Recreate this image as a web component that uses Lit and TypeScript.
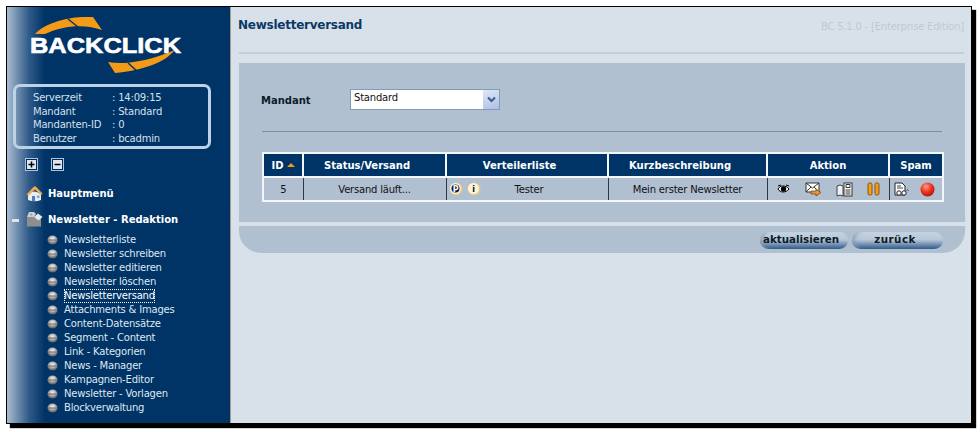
import { LitElement, html, css } from "lit";
import { customElement } from "lit/decorators.js";

const items = ["Newsletterliste","Newsletter schreiben","Newsletter editieren","Newsletter löschen","Newsletterversand","Attachments & Images","Content-Datensätze","Segment - Content","Link - Kategorien","News - Manager","Kampagnen-Editor","Newsletter - Vorlagen","Blockverwaltung"];

const bullet = html`<svg class="bullet" width="11" height="10" viewBox="0 0 11 10"><defs><radialGradient id="bl" cx="50%" cy="35%" r="65%"><stop offset="0" stop-color="#f4f4f4"/><stop offset=".55" stop-color="#a8a8a8"/><stop offset="1" stop-color="#555"/></radialGradient></defs><ellipse cx="5.5" cy="5" rx="5" ry="4.5" fill="url(#bl)"/><path d="M1 5h9" stroke="#6d6d6d" stroke-width="1"/></svg>`;

function badge(l: string) {
  return html`<svg width="14" height="14" viewBox="0 0 14 14"><circle cx="7" cy="7" r="6.500" fill="#e8c98a"/><circle cx="6.500" cy="6.500" r="5.500" fill="#fbf3dc"/><circle cx="6.500" cy="6.500" r="4" fill="${l === "P" ? "#0a1f44" : "#fbf3dc"}"/><text x="6.500" y="9.500" text-anchor="middle" font-family="DejaVu Sans" font-weight="700" font-size="8" fill="${l === "P" ? "#fff" : "#111"}">${l}</text></svg>`;
}

@customElement("app-root")
export class AppRoot extends LitElement {
  static styles = css`
    :host { display:block; width:980px; height:432px; background:#fff; overflow:hidden; font-family:"DejaVu Sans",Verdana,sans-serif; font-size:10px; letter-spacing:-.2px; box-sizing:border-box; padding:6px 0 0 6px; }
    .frame { display:flex; width:966px; height:418px; box-sizing:border-box; border:1px solid #000; box-shadow:4px 4px 1px #000; background:#d8e1e9; }
    .side { width:223px; flex:none; background:linear-gradient(90deg,#a9bdd2 0,#7d98b5 8px,#2f5a88 22px,#003366 38px); color:#e8eef5; display:flex; flex-direction:column; }
    .logo { height:77px; padding-left:17px; flex:none; }
    .logo text { letter-spacing:0; }
    .info { margin-left:6px; width:198px; height:65px; box-sizing:border-box; border:3px solid #bdd2e6; border-radius:7px; padding:4px 0 0 17px; display:grid; grid-template-columns:79px 1fr; grid-auto-rows:13.5px; line-height:13.5px; color:#d5e0ec; flex:none; }
    .toggles { display:flex; gap:13px; margin:9px 0 0 18px; flex:none; }
    .tg { width:13px; height:13px; box-sizing:border-box; border:1px solid #a9c4e0; background:#002a55; padding:1px; display:flex; }
    .tg svg { display:block; }
    .main-link { display:flex; align-items:center; font-weight:700; font-size:10px; letter-spacing:0; color:#fff; height:18px; }
    .h1 { margin-top:13px; padding-left:19px; gap:5px; }
    .h2 { margin-top:8px; padding-left:5px; }
    .h2 .mn { width:7px; height:3px; background:#e8e8e8; margin:3px 7px 0 0; border:1px solid #dde; box-sizing:border-box; }
    .h2 svg { margin-right:5px; }
    .list { margin:5px 0 0 40px; display:flex; flex-direction:column; }
    .it { height:14px; line-height:14px; display:flex; align-items:center; color:#dfe8f1; white-space:nowrap; }
    .bullet { margin-right:6px; flex:none; }
    .it span { box-sizing:border-box; height:14px; line-height:13px; }
    .it.cur span { outline:1px dotted #fff; outline-offset:-1px; color:#fff; }
    .main { flex:1; border-left:1px solid #9a9f8c; display:flex; flex-direction:column; padding:0 6px 0 8px; min-width:0; }
    .top { display:flex; justify-content:space-between; height:47px; box-sizing:border-box; padding-top:10px; border-bottom:2px solid #c2cedb; margin-right:1px; }
    .top h1 { margin:0 0 0 -1px; font-size:12px; letter-spacing:-.25px; font-weight:700; color:#0b3a66; line-height:17px; }
    .ver { color:#bfc9d3; padding-top:4px; font-size:10px; letter-spacing:-.2px; }
    .panel { margin-top:9px; background:#b0c0d1; height:159px; box-sizing:border-box; padding:28px 23px 0 23px; }
    .sel-row { display:flex; align-items:center; height:22px; }
    .sel-row b { width:89px; font-size:10px; letter-spacing:0; color:#0d1b2a; padding-bottom:3px; margin-left:-1px; }
    .sel { width:150px; height:21px; box-sizing:border-box; border:1px solid #7f9db9; background:#fff; color:#111; display:flex; justify-content:space-between; padding:2px 0 0 3px; position:relative; top:-3px; }
    .arrow { width:16px; height:19px; margin-top:-2px; background:linear-gradient(160deg,#dfe8f6,#aebfe4); display:flex; align-items:center; justify-content:center; }
    hr { border:0; border-top:1px solid #7c8fa3; margin:18px 0 0; width:680px; }
    table { margin:20px 0 0; width:680px; border-collapse:collapse; table-layout:fixed; border:2px solid #f2f6fa; }
    th { background:#003366; color:#fff; font-size:10px; height:22px; border:2px solid #f2f6fa; padding:0; font-weight:700; letter-spacing:0; }
    th.sh { padding-right:15px; }
    td { height:22px; border-left:1px solid #2c3a48; padding:0; text-align:center; color:#111; background:#b0c0d1; }
    td:first-child { border-left:0; }
    .tri { display:inline-block; border:4px solid transparent; border-top:0; border-bottom:4px solid #f09a1a; margin-left:3px; vertical-align:2px; }
    .vl { position:relative; padding-left:4px; }
    .pi { display:flex; gap:4px; position:absolute; left:2px; top:4px; }
    .ic { display:flex; align-items:center; padding-left:9px; height:22px; }
    .ic.sp { padding-left:4px; gap:10px; }
    .gap1 { margin-left:15px; }
    .gap2 { margin-left:14px; }
    .gap3 { margin-left:14px; }
    .band { margin-top:4px; height:27px; background:#b0c0d1; border-radius:0 0 22px 22px; display:flex; justify-content:flex-end; gap:4px; padding:6px 22px 0 0; box-sizing:border-box; }
    .btn { height:17px; border-radius:9px; font-weight:700; font-size:10.3px; letter-spacing:0; line-height:15px; color:#0d1b2a; text-align:center; background:linear-gradient(180deg,#c7d4e0 0,#b8c7d7 45%,#6f8dae 75%,#2c5a8a 100%); box-shadow:inset 6px 0 5px -4px #7f9ab5; box-sizing:border-box; }
    .b1 { width:88px; padding-right:6px; }
    .b2 { width:91px; padding-right:5px; letter-spacing:.5px; }
  `;

  render() {
    return html`<div class="frame">
      <div class="side">
        <div class="logo">
          <svg width="170" height="77" viewBox="0 0 170 77">
            <path d="M11 27 C20 17 40 11 58 10 L69 10 L78 23 C62 17 40 18 21 27 Z" fill="#f39a17"/>
            <path d="M44 12 L54 20" stroke="#003366" stroke-width="1.5"/>
            <path d="M84 55 C100 58 122 55 151 43 C140 56 120 63 91 66 Z" fill="#f39a17"/>
            <path d="M104 56 L114 65" stroke="#003366" stroke-width="1.5"/>
            <text x="6" y="46" font-family="Liberation Sans" font-weight="700" font-size="21.500" fill="#fff" stroke="#fff" stroke-width=".6" textLength="151" lengthAdjust="spacingAndGlyphs">BACKCLICK</text>
          </svg>
        </div>
        <div class="info">
          <span>Serverzeit</span><span>: 14:09:15</span>
          <span>Mandant</span><span>: Standard</span>
          <span>Mandanten-ID</span><span>: 0</span>
          <span>Benutzer</span><span>: bcadmin</span>
        </div>
        <div class="toggles">
          <div class="tg"><svg width="9" height="9" viewBox="0 0 9 9"><rect width="9" height="9" fill="#dfe6ee"/><path d="M1.500 4.500h6M4.500 1.500v6" stroke="#000" stroke-width="1.500"/></svg></div>
          <div class="tg"><svg width="9" height="9" viewBox="0 0 9 9"><rect width="9" height="9" fill="#dfe6ee"/><path d="M1.500 4.500h6" stroke="#000" stroke-width="1.500"/></svg></div>
        </div>
        <div class="main-link h1">
          <svg width="17" height="17" viewBox="0 0 17 17"><path d="M2 9 Q8 4 15 9 L15 15 Q9 17.500 2 15z" fill="#e6edf5"/><path d="M6 16v-5h3v5z" fill="#4f7fb5"/><path d="M11 10.500h2.500v2.500H11z" fill="#7aa6d8"/><path d="M0.500 9.500 8 1.500 Q9 .8 10 1.800 L16.500 8.500 15 10 9 4.500 2.500 10.500z" fill="#f5a94a"/></svg>
          <span>Hauptmenü</span>
        </div>
        <div class="main-link h2">
          <div class="mn"></div>
          <svg width="17" height="16" viewBox="0 0 17 16"><path d="M1 6h14v9.500H1z" fill="#8c8f8e"/><path d="M1 6 3 1h5l2 2-2 3z" fill="#c9cfd4"/><path d="M8 6l4-3.500 4.500 3.500-4 3.500z" fill="#e4e9ee"/><path d="M4 3l2 1" stroke="#7f8a94"/></svg>
          <span>Newsletter - Redaktion</span>
        </div>
        <div class="list">
          ${items.map((t) => html`<div class="it ${t === "Newsletterversand" ? "cur" : ""}">${bullet}<span>${t}</span></div>`)}
        </div>
      </div>
      <div class="main">
        <div class="top"><h1>Newsletterversand</h1><span class="ver">BC 5.1.0 - [Enterprise Edition]</span></div>
        <div class="panel">
          <div class="sel-row"><b>Mandant</b>
            <div class="sel"><span>Standard</span><div class="arrow"><svg width="9" height="7" viewBox="0 0 9 7"><path d="M1 1.500 4.500 5 8 1.500" fill="none" stroke="#3c5a8c" stroke-width="2"/></svg></div></div>
          </div>
          <hr />
          <table>
            <colgroup><col style="width:40px"/><col style="width:143px"/><col style="width:162px"/><col style="width:159px"/><col style="width:122px"/><col style="width:54px"/></colgroup>
            <tr><th>ID<span class="tri"></span></th><th class="sh">Status/Versand</th><th class="sh">Verteilerliste</th><th class="sh">Kurzbeschreibung</th><th>Aktion</th><th>Spam</th></tr>
            <tr>
              <td>5</td><td>Versand läuft...</td>
              <td class="vl"><div class="pi">${badge("P")}${badge("i")}</div>Tester</td>
              <td>Mein erster Newsletter</td>
              <td><div class="ic">
                <svg width="13" height="10" viewBox="0 0 13 10"><path d="M1 5C3 1 9 1 12 5 9 9 3 9 1 5z" fill="#fff" stroke="#000"/><circle cx="6.500" cy="5" r="2.700" fill="#000"/><path d="M1 2 4 1M9 1l3 1" stroke="#000"/></svg>
                <svg class="gap1" width="17" height="15" viewBox="0 0 17 15"><path d="M1 1h13v9H1z" fill="#fff" stroke="#333"/><path d="M1 1l6.500 5L14 1M1 10l5-5M14 10 9 5" fill="none" stroke="#333"/><path d="M6 9h5V7l5 3.500L11 14v-2H6z" fill="#e8952e" stroke="#6b3d08" stroke-width=".7"/></svg>
                <svg class="gap2" width="17" height="15" viewBox="0 0 17 15"><path d="M1 4l3-1 3 1v10l-3-1-3 1z" fill="#eef2f6" stroke="#333" stroke-width=".9"/><rect x="8" y="1" width="8" height="13" fill="#fff" stroke="#333"/><path d="M10 2.500h4v3h-4zM9.500 8h5M9.500 10h5M9.500 12h5" fill="none" stroke="#333"/></svg>
                <svg class="gap3" width="13" height="14" viewBox="0 0 13 14"><rect x="1" y="1" width="4" height="12" rx="1.500" fill="#ef9c20" stroke="#8a5408"/><rect x="8" y="1" width="4" height="12" rx="1.500" fill="#ef9c20" stroke="#8a5408"/></svg>
              </div></td>
              <td><div class="ic sp">
                <svg width="16" height="15" viewBox="0 0 16 15"><path d="M1 1h7l3 3v9H1z" fill="#fff" stroke="#222"/><path d="M3 4h4M3 6h6" stroke="#444"/><circle cx="5" cy="11" r="2.200" fill="#fff" stroke="#222"/><circle cx="10" cy="11" r="2.200" fill="#fff" stroke="#222"/><path d="M12.500 9l1-1.500 1.500 1.500" fill="none" stroke="#333" stroke-width=".7"/></svg>
                <svg width="15" height="15" viewBox="0 0 15 15"><defs><radialGradient id="rd" cx="40%" cy="30%" r="70%"><stop offset="0" stop-color="#ff9c88"/><stop offset=".55" stop-color="#ee3322"/><stop offset="1" stop-color="#b01808"/></radialGradient></defs><circle cx="7.500" cy="7.500" r="7" fill="url(#rd)"/></svg>
              </div></td>
            </tr>
          </table>
        </div>
        <div class="band"><div class="btn b1">aktualisieren</div><div class="btn b2">zurück</div></div>
      </div>
    </div>`;
  }
}
